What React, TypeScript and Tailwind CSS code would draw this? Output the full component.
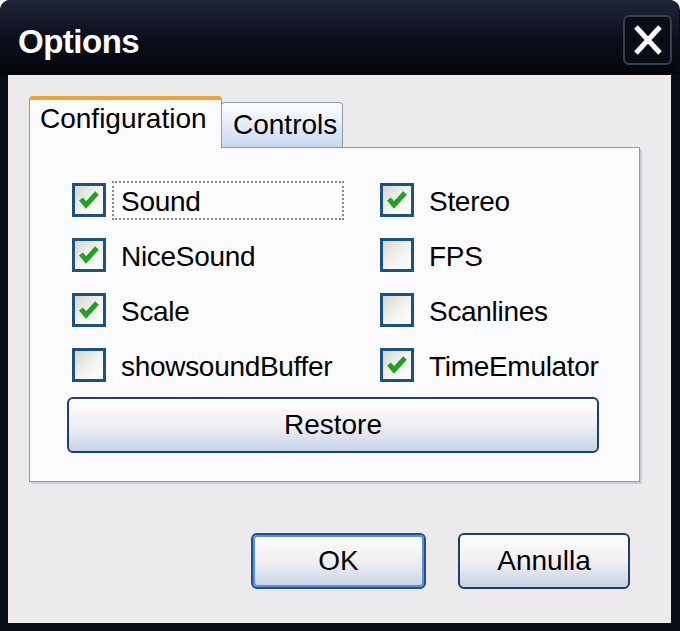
import React from 'react';

const font = { fontFamily: '"Liberation Sans", Arial, sans-serif' };

const options: { label: string; checked: boolean; focused?: boolean }[] = [
  { label: 'Sound', checked: true, focused: true },
  { label: 'Stereo', checked: true },
  { label: 'NiceSound', checked: true },
  { label: 'FPS', checked: false },
  { label: 'Scale', checked: true },
  { label: 'Scanlines', checked: false },
  { label: 'showsoundBuffer', checked: false },
  { label: 'TimeEmulator', checked: true },
];

function CheckBox({ checked }: { checked: boolean }) {
  return (
    <div className="w-[34px] h-[34px] shrink-0 border-[3px] border-[#1c5180] bg-gradient-to-br from-[#d6d6d0] via-[#f1f1ee] to-white flex items-center justify-center">
      {checked && (
        <svg width="26" height="26" viewBox="0 0 26 26">
          <polyline points="5,12 10,18 21,6" fill="none" stroke="#21a121" strokeWidth="5" strokeLinejoin="miter" />
        </svg>
      )}
    </div>
  );
}

function Option({ label, checked, focused }: { label: string; checked: boolean; focused?: boolean }) {
  return (
    <div className="flex items-center h-[34px]">
      <CheckBox checked={checked} />
      <div
        className={
          focused
            ? 'ml-[6px] w-[232px] h-[39px] flex items-center pl-[7px] border-[2px] border-dotted border-[#8a8a8a]'
            : 'ml-[6px] h-[39px] flex items-center pl-[7px] border-[2px] border-transparent'
        }
      >
        <span className="text-[28px] leading-[32px] tracking-[-0.3px] text-black mt-[4px]">{label}</span>
      </div>
    </div>
  );
}

function XpButton({ label, width, isDefault }: { label: string; width: string; isDefault?: boolean }) {
  return (
    <button
      className={
        'h-[56px] rounded-[6px] text-[28px] leading-[32px] text-black bg-gradient-to-b from-white via-[#f0f0f3] to-[#c7d3e6] ' +
        width +
        (isDefault
          ? ' border-[2px] border-[#1f4f9a] shadow-[inset_0_0_0_2px_#5b8fd6]'
          : ' border-[2px] border-[#1d3f6e]')
      }
    >
      {label}
    </button>
  );
}

export default function App() {
  return (
    <div className="w-[680px] h-[631px] bg-white" style={font}>
      <div className="h-full rounded-t-[10px] bg-[#0b0d16] flex flex-col pl-[8px] pr-[9px] pb-[8px]">
        <div className="h-[75px] -mx-[8px] px-[8px] rounded-t-[10px] bg-gradient-to-b from-[#20253a] via-[#0c0f1c] to-[#05060c] flex items-start justify-between">
          <h1 className="ml-[10px] mt-[22px] text-[33px] leading-[40px] font-bold tracking-[-0.5px] text-white">
            Options
          </h1>
          <div className="mt-[15px] mr-[-1px] w-[49px] h-[50px] rounded-[6px] border-[2px] border-[#3a3f4e] bg-[#0a0d18] flex items-center justify-center">
            <svg width="32" height="30" viewBox="0 0 32 30">
              <path d="M4 2 L28 28 M28 2 L4 28" stroke="white" strokeWidth="5" strokeLinecap="butt" />
            </svg>
          </div>
        </div>

        <div className="flex-1 bg-[#eceaed] pt-[21px] pl-[21px] pr-[31px] flex flex-col">
          <div className="relative z-10 flex items-end h-[51px]">
            <div className="w-[193px] h-[52px] -mb-[1px] bg-[#fbfbfd] border-x border-[#8c9cae] rounded-t-[4px] border-t-[4px] border-t-[#f2a431] pl-[10px] pt-[3px]">
              <span className="text-[28px] leading-[32px] text-black">Configuration</span>
            </div>
            <div className="w-[122px] h-[45px] -ml-[1px] bg-gradient-to-b from-white to-[#c9d8ee] border border-b-0 border-[#8c9cae] rounded-t-[4px] pl-[11px] pt-[6px]">
              <span className="text-[28px] leading-[32px] text-black">Controls</span>
            </div>
          </div>

          <div className="bg-[#fbfbfd] border border-[#8c9cae] shadow-[2px_2px_0_#c9ced8] pt-[35px] pb-[28px] pl-[42px]">
            <div className="grid grid-cols-[308px_1fr] gap-y-[21px]">
              {options.map((o) => (
                <Option key={o.label} label={o.label} checked={o.checked} focused={o.focused} />
              ))}
            </div>
            <div className="mt-[15px] -ml-[5px]">
              <XpButton label="Restore" width="w-[532px]" />
            </div>
          </div>

          <div className="flex justify-end gap-[32px] mt-[51px] pr-[10px]">
            <XpButton label="OK" width="w-[175px]" isDefault />
            <XpButton label="Annulla" width="w-[172px]" />
          </div>
        </div>
      </div>
    </div>
  );
}
